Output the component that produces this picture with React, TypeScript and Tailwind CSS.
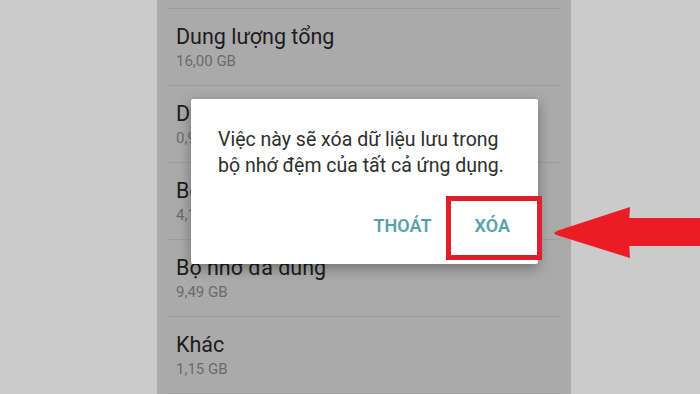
const rows = [
  { title: "Dung lượng tổng", value: "16,00 GB" },
  { title: "Dữ liệu hệ thống", value: "0,94 GB" },
  { title: "Bộ nhớ đệm", value: "4,12 GB" },
  { title: "Bộ nhớ đã dùng", value: "9,49 GB" },
  { title: "Khác", value: "1,15 GB" },
];

export default function App() {
  return (
    <div
      className="relative flex h-[394px] w-[700px] overflow-hidden bg-[#cbcbcb]"
      style={{ fontFamily: "Roboto, 'Noto Sans', sans-serif" }}
    >
      <div className="w-[157px] shrink-0 bg-[#cbcbcb]" />

      {/* dimmed settings list */}
      <div className="w-[414px] shrink-0 bg-[#aaaaaa] pt-[8px]">
        <div className="mx-[11px] border-t border-[#9d9d9d]">
          {rows.map((r) => (
            <div key={r.title} className="border-b border-[#9d9d9d] pl-2 pt-[15px] pb-[15px]">
              <p className="text-[21.5px] leading-[26px] text-[#1c1c1c]">{r.title}</p>
              <p className="mt-[2px] text-[15px] leading-[18px] text-[#6a6a6a]">{r.value}</p>
            </div>
          ))}
        </div>
      </div>

      <div className="flex-1 bg-[#cbcbcb]" />

      {/* dialog */}
      <div className="absolute left-[191px] top-[99px] flex h-[165px] w-[347px] flex-col rounded-[2px] bg-white shadow-[0_4px_14px_rgba(0,0,0,0.35)]">
        <p className="pl-[27px] pt-[28px] text-[19.5px] leading-[26px] text-[#2e2e2e]">
          Việc này sẽ xóa dữ liệu lưu trong
          <br />
          bộ nhớ đệm của tất cả ứng dụng.
        </p>
        <div className="mt-auto flex items-center justify-end pb-[28px] pr-[28px] text-[18px] font-semibold leading-[20px] text-[#5a9fae]">
          <span className="mr-[43px]">THOÁT</span>
          <span>XÓA</span>
        </div>
      </div>

      {/* highlight box */}
      <div className="absolute left-[446px] top-[196px] h-[64px] w-[96px] border-[5px] border-[#df1f2b]" />

      {/* arrow */}
      <svg className="absolute left-0 top-0" width="700" height="394" viewBox="0 0 700 394">
        <path
          d="M554 233 Q555 231.5 558 230.5 L630 207 Q628 232 630 258 L558 235.5 Q555 234.5 554 233 Z"
          fill="#ec1c24"
        />
        <rect x="628" y="218" width="72" height="28" fill="#ec1c24" />
      </svg>
    </div>
  );
}
